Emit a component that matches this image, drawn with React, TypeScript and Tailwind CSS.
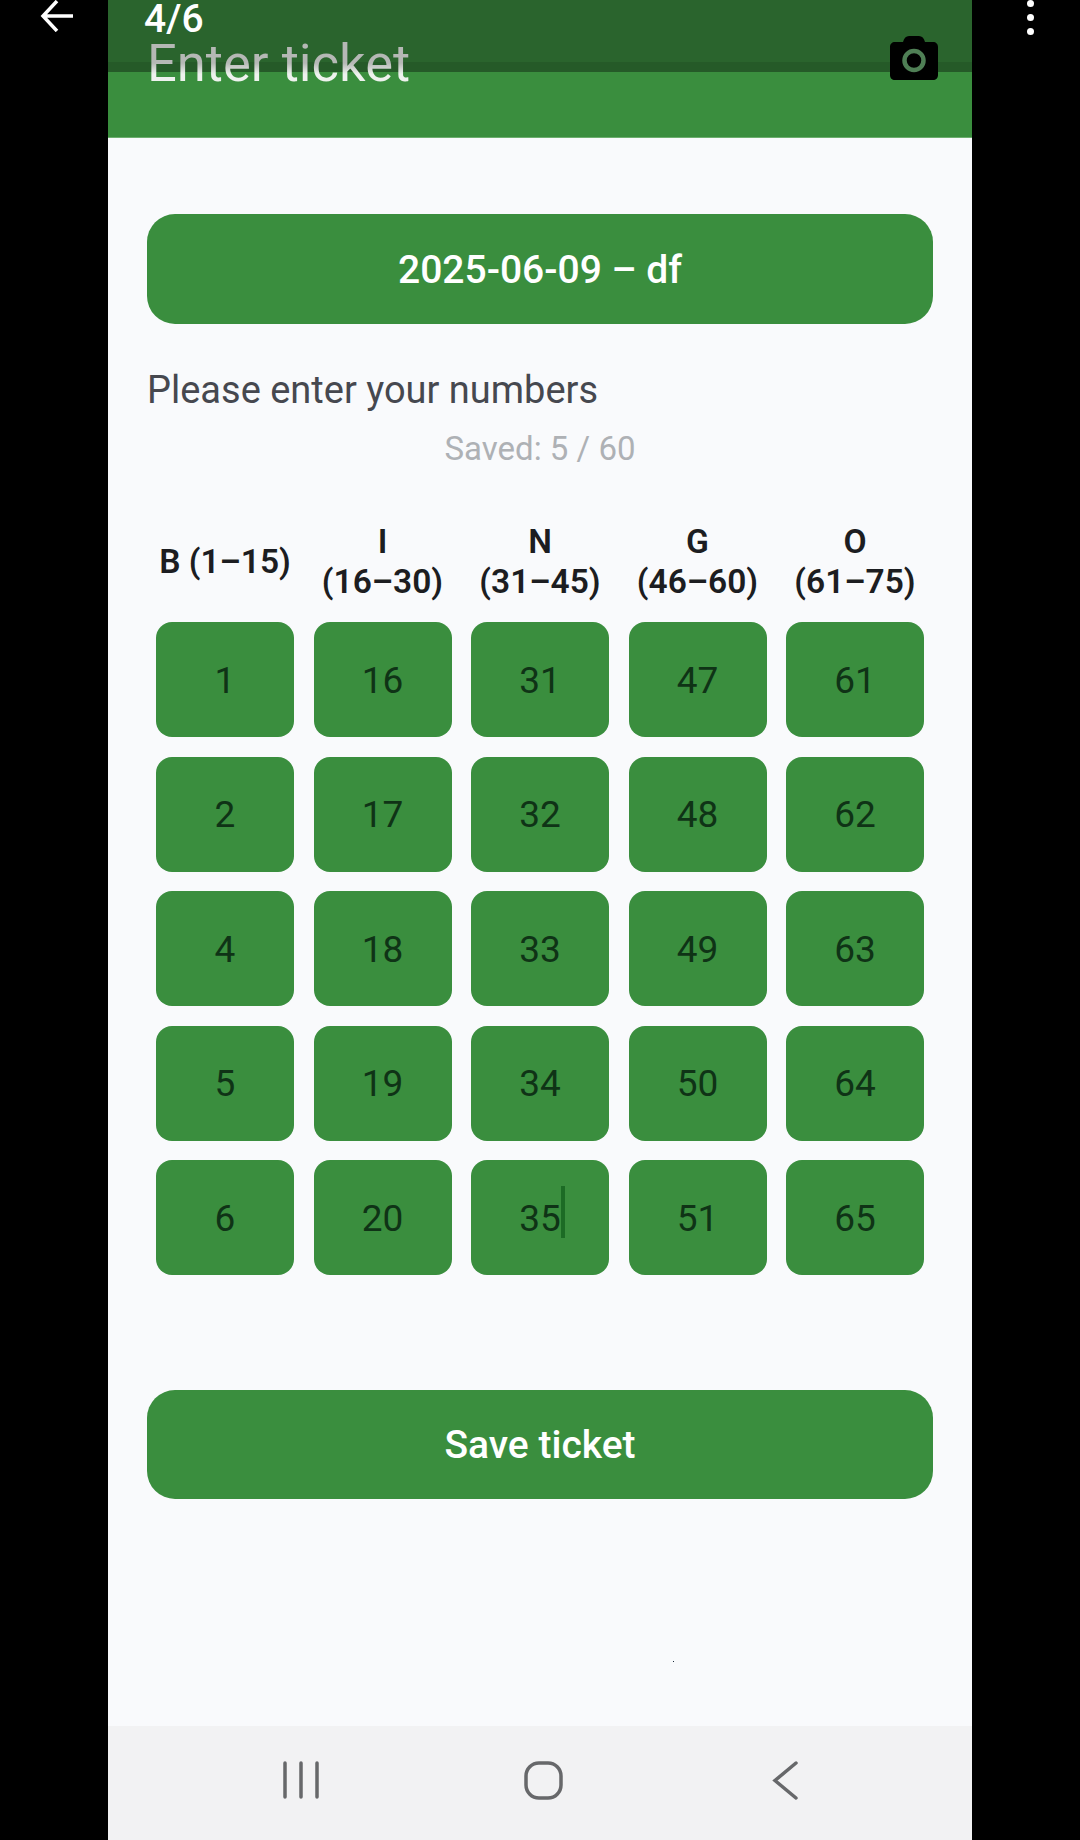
const columns = [
  { title: ["B (1–15)"], nums: [1, 2, 4, 5, 6] },
  { title: ["I", "(16–30)"], nums: [16, 17, 18, 19, 20] },
  { title: ["N", "(31–45)"], nums: [31, 32, 33, 34, 35] },
  { title: ["G", "(46–60)"], nums: [47, 48, 49, 50, 51] },
  { title: ["O", "(61–75)"], nums: [61, 62, 63, 64, 65] },
];

function Cell({ n }: { n: number }) {
  return (
    <div className="h-[115px] w-[138px] pt-[2px] rounded-[16px] bg-[#3a8e3e] flex items-center justify-center text-[37px] text-[#0f3316]">
      <span className="relative">
        {n}
        {n === 35 && (
          <span className="absolute left-[100%] top-[-5px] h-[52px] w-[4px] bg-[#1c6b25]" />
        )}
      </span>
    </div>
  );
}

export default function App() {
  return (
    <div className="relative h-[1840px] w-[1080px] overflow-hidden bg-black flex justify-center font-['Roboto',sans-serif]">
      <div className="w-[864px] h-full flex flex-col bg-[#f9fafc]">
        <div className="h-[138px] shrink-0 relative bg-[#3a8e3e] border-b border-[#6cae6e]">
          <div className="h-[62px] bg-[#2a642d]" />
          <div className="h-[10px] bg-[#255a28]" />
          <div className="absolute left-[39px] top-[32px] text-[52.500px] leading-[62px] text-transparent bg-clip-text bg-[linear-gradient(180deg,#b5b8b5_0%,#b5b8b5_50%,#eef2ee_68%,#eef2ee_100%)]">
            Enter ticket
          </div>
          <svg className="absolute left-[782px] top-[36px]" width="48" height="44" viewBox="0 0 48 44">
            <path
              d="M13 6 C14 2 16 0 19 0 H29 C32 0 34 2 35 6 H43 C46 6 48 8 48 11 V39 C48 42 46 44 43 44 H5 C2 44 0 42 0 39 V11 C0 8 2 6 5 6 Z"
              fill="#000"
            />
            <circle cx="24" cy="24.500" r="9.500" fill="none" stroke="#4f7f55" strokeWidth="4.500" />
          </svg>
        </div>

        <div className="flex flex-col flex-1 px-[39px]">
          <div className="mt-[76px] h-[110px] pt-[2px] rounded-[28px] bg-[#3a8e3e] flex items-center justify-center text-white text-[39px] font-medium">
            2025-06-09 – df
          </div>
          <div className="mt-[43px] text-[38px] leading-[46px] text-[#46484f]">Please enter your numbers</div>
          <div className="mt-[17px] text-center text-[33px] leading-[38px] text-[#aeb1b5]">Saved: 5 / 60</div>

          <div className="mt-[54px] flex justify-between px-[9px]">
            {columns.map((c) => (
              <div key={c.title[0]} className="w-[138px] flex flex-col items-center">
                <div className="h-[80px] flex flex-col items-center justify-center text-[33.500px] leading-[40px] font-semibold text-[#1c1d21] whitespace-nowrap">
                  {c.title.map((t) => (
                    <div key={t}>{t}</div>
                  ))}
                </div>
                <div className="mt-[20px] flex flex-col gap-[19.500px]">
                  {c.nums.map((n) => (
                    <Cell key={n} n={n} />
                  ))}
                </div>
              </div>
            ))}
          </div>

          <div className="mt-[115px] h-[109px] pt-[2px] rounded-[28px] bg-[#3a8e3e] flex items-center justify-center text-white text-[39px] font-medium">
            Save ticket
          </div>
        </div>

        <div className="h-[114px] shrink-0 bg-[#f2f2f3] relative">
          <svg className="absolute inset-0" width="864" height="114" viewBox="0 0 864 114">
            <g stroke="#67686a" strokeWidth="3.500" strokeLinecap="round" fill="none">
              <path d="M177 37V71M193 37V71M209 37V71" />
              <rect x="418" y="37" width="35" height="35" rx="13" />
              <path d="M688 37L667 54.500L688 72" />
            </g>
          </svg>
        </div>
      </div>

      <svg className="absolute left-[40px] top-0" width="36" height="32" viewBox="0 0 36 32">
        <path d="M33 16H4M17 1L3 16L17 31" stroke="#fff" strokeWidth="3.500" fill="none" />
      </svg>
      <div className="absolute left-[144px] top-[1px] text-[39px] leading-[36px] font-medium text-white">4/6</div>
      <div className="absolute left-[1027px] top-0 flex flex-col gap-[7px]">
        <div className="h-[7px] w-[7px] rounded-full bg-white" />
        <div className="h-[7px] w-[7px] rounded-full bg-white" />
        <div className="h-[7px] w-[7px] rounded-full bg-white" />
      </div>
      <div className="absolute left-[673px] top-[1661px] h-[1px] w-[1px] bg-[#1c2a3a]" />
    </div>
  );
}
